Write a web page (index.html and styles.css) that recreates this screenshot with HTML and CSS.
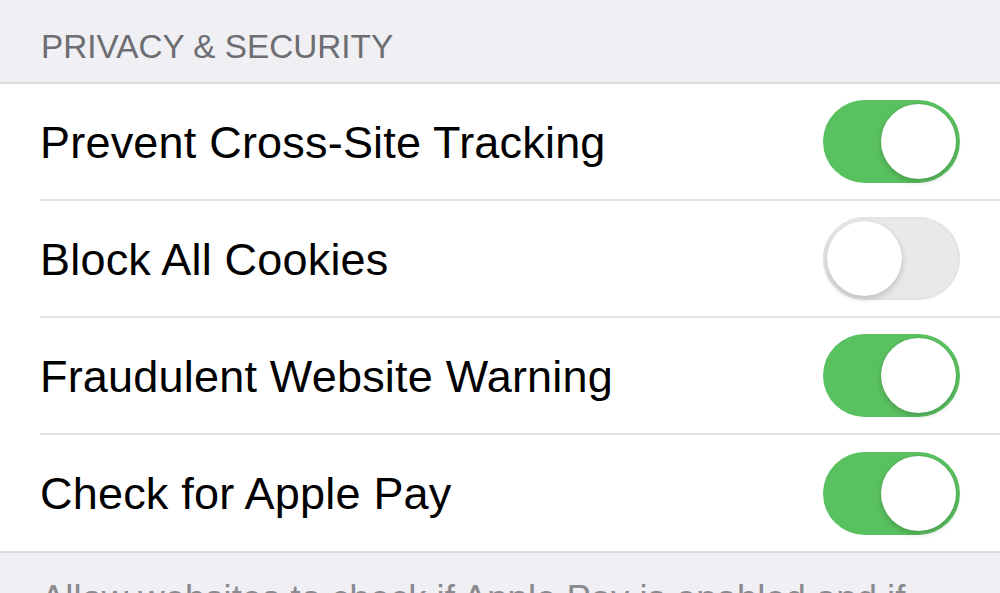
FILE: index.html
```html
<!DOCTYPE html>
<html>
<head>
<meta charset="utf-8">
<link rel="stylesheet" href="styles.css">
</head>
<body>
<div class="page">
  <div class="section-header">PRIVACY &amp; SECURITY</div>
  <div class="group">
    <div class="row">
      <span class="label">Prevent Cross-Site Tracking</span>
      <span class="toggle on"><span class="knob"></span></span>
    </div>
    <div class="row">
      <span class="label">Block All Cookies</span>
      <span class="toggle off"><span class="knob"></span></span>
    </div>
    <div class="row">
      <span class="label">Fraudulent Website Warning</span>
      <span class="toggle on"><span class="knob"></span></span>
    </div>
    <div class="row">
      <span class="label">Check for Apple Pay</span>
      <span class="toggle on"><span class="knob"></span></span>
    </div>
  </div>
  <div class="footer">Allow websites to check if Apple Pay is enabled and if you have an Apple Card account.</div>
</div>
</body>
</html>
```
FILE: styles.css
```css
html, body {
  margin: 0;
  padding: 0;
}
body {
  background: #efeff4;
  font-family: "Liberation Sans", Arial, sans-serif;
  width: 1000px;
  height: 593px;
  overflow: hidden;
}
.page {
  display: flex;
  flex-direction: column;
}
.section-header {
  height: 84px;
  box-sizing: border-box;
  padding: 28px 0 0 41px;
  font-size: 33.3px;
  color: #6d6d72;
  border-bottom: 2px solid #dcdce0;
}
.group {
  background: #fff;
  border-bottom: 2px solid #dcdce0;
  padding-left: 40px;
}
.row {
  height: 117px;
  box-sizing: border-box;
  display: flex;
  align-items: center;
  justify-content: space-between;
  padding-right: 40px;
  border-bottom: 2px solid #e2e2e4;
}
.row:last-child {
  border-bottom: none;
  height: 116px;
}
.label {
  font-size: 45px;
  letter-spacing: 0.2px;
  color: #000;
  padding-top: 2px;
}
.toggle {
  width: 137px;
  height: 83px;
  border-radius: 42px;
  box-sizing: border-box;
  display: flex;
  align-items: center;
  padding: 4px;
}
.toggle.on {
  background: #5ac160;
  justify-content: flex-end;
}
.toggle.off {
  background: #e9e9ea;
  justify-content: flex-start;
  box-shadow: inset 0 0 0 2px #e4e4e6;
}
.knob {
  width: 75px;
  height: 75px;
  border-radius: 50%;
  background: #fff;
  box-shadow: 0 3px 6px rgba(0,0,0,0.18), 0 0 1px rgba(0,0,0,0.15);
}
.footer {
  padding: 24px 40px 0 41px;
  font-size: 36.5px;
  color: #8a8a8e;
  line-height: 44px;
}
```
